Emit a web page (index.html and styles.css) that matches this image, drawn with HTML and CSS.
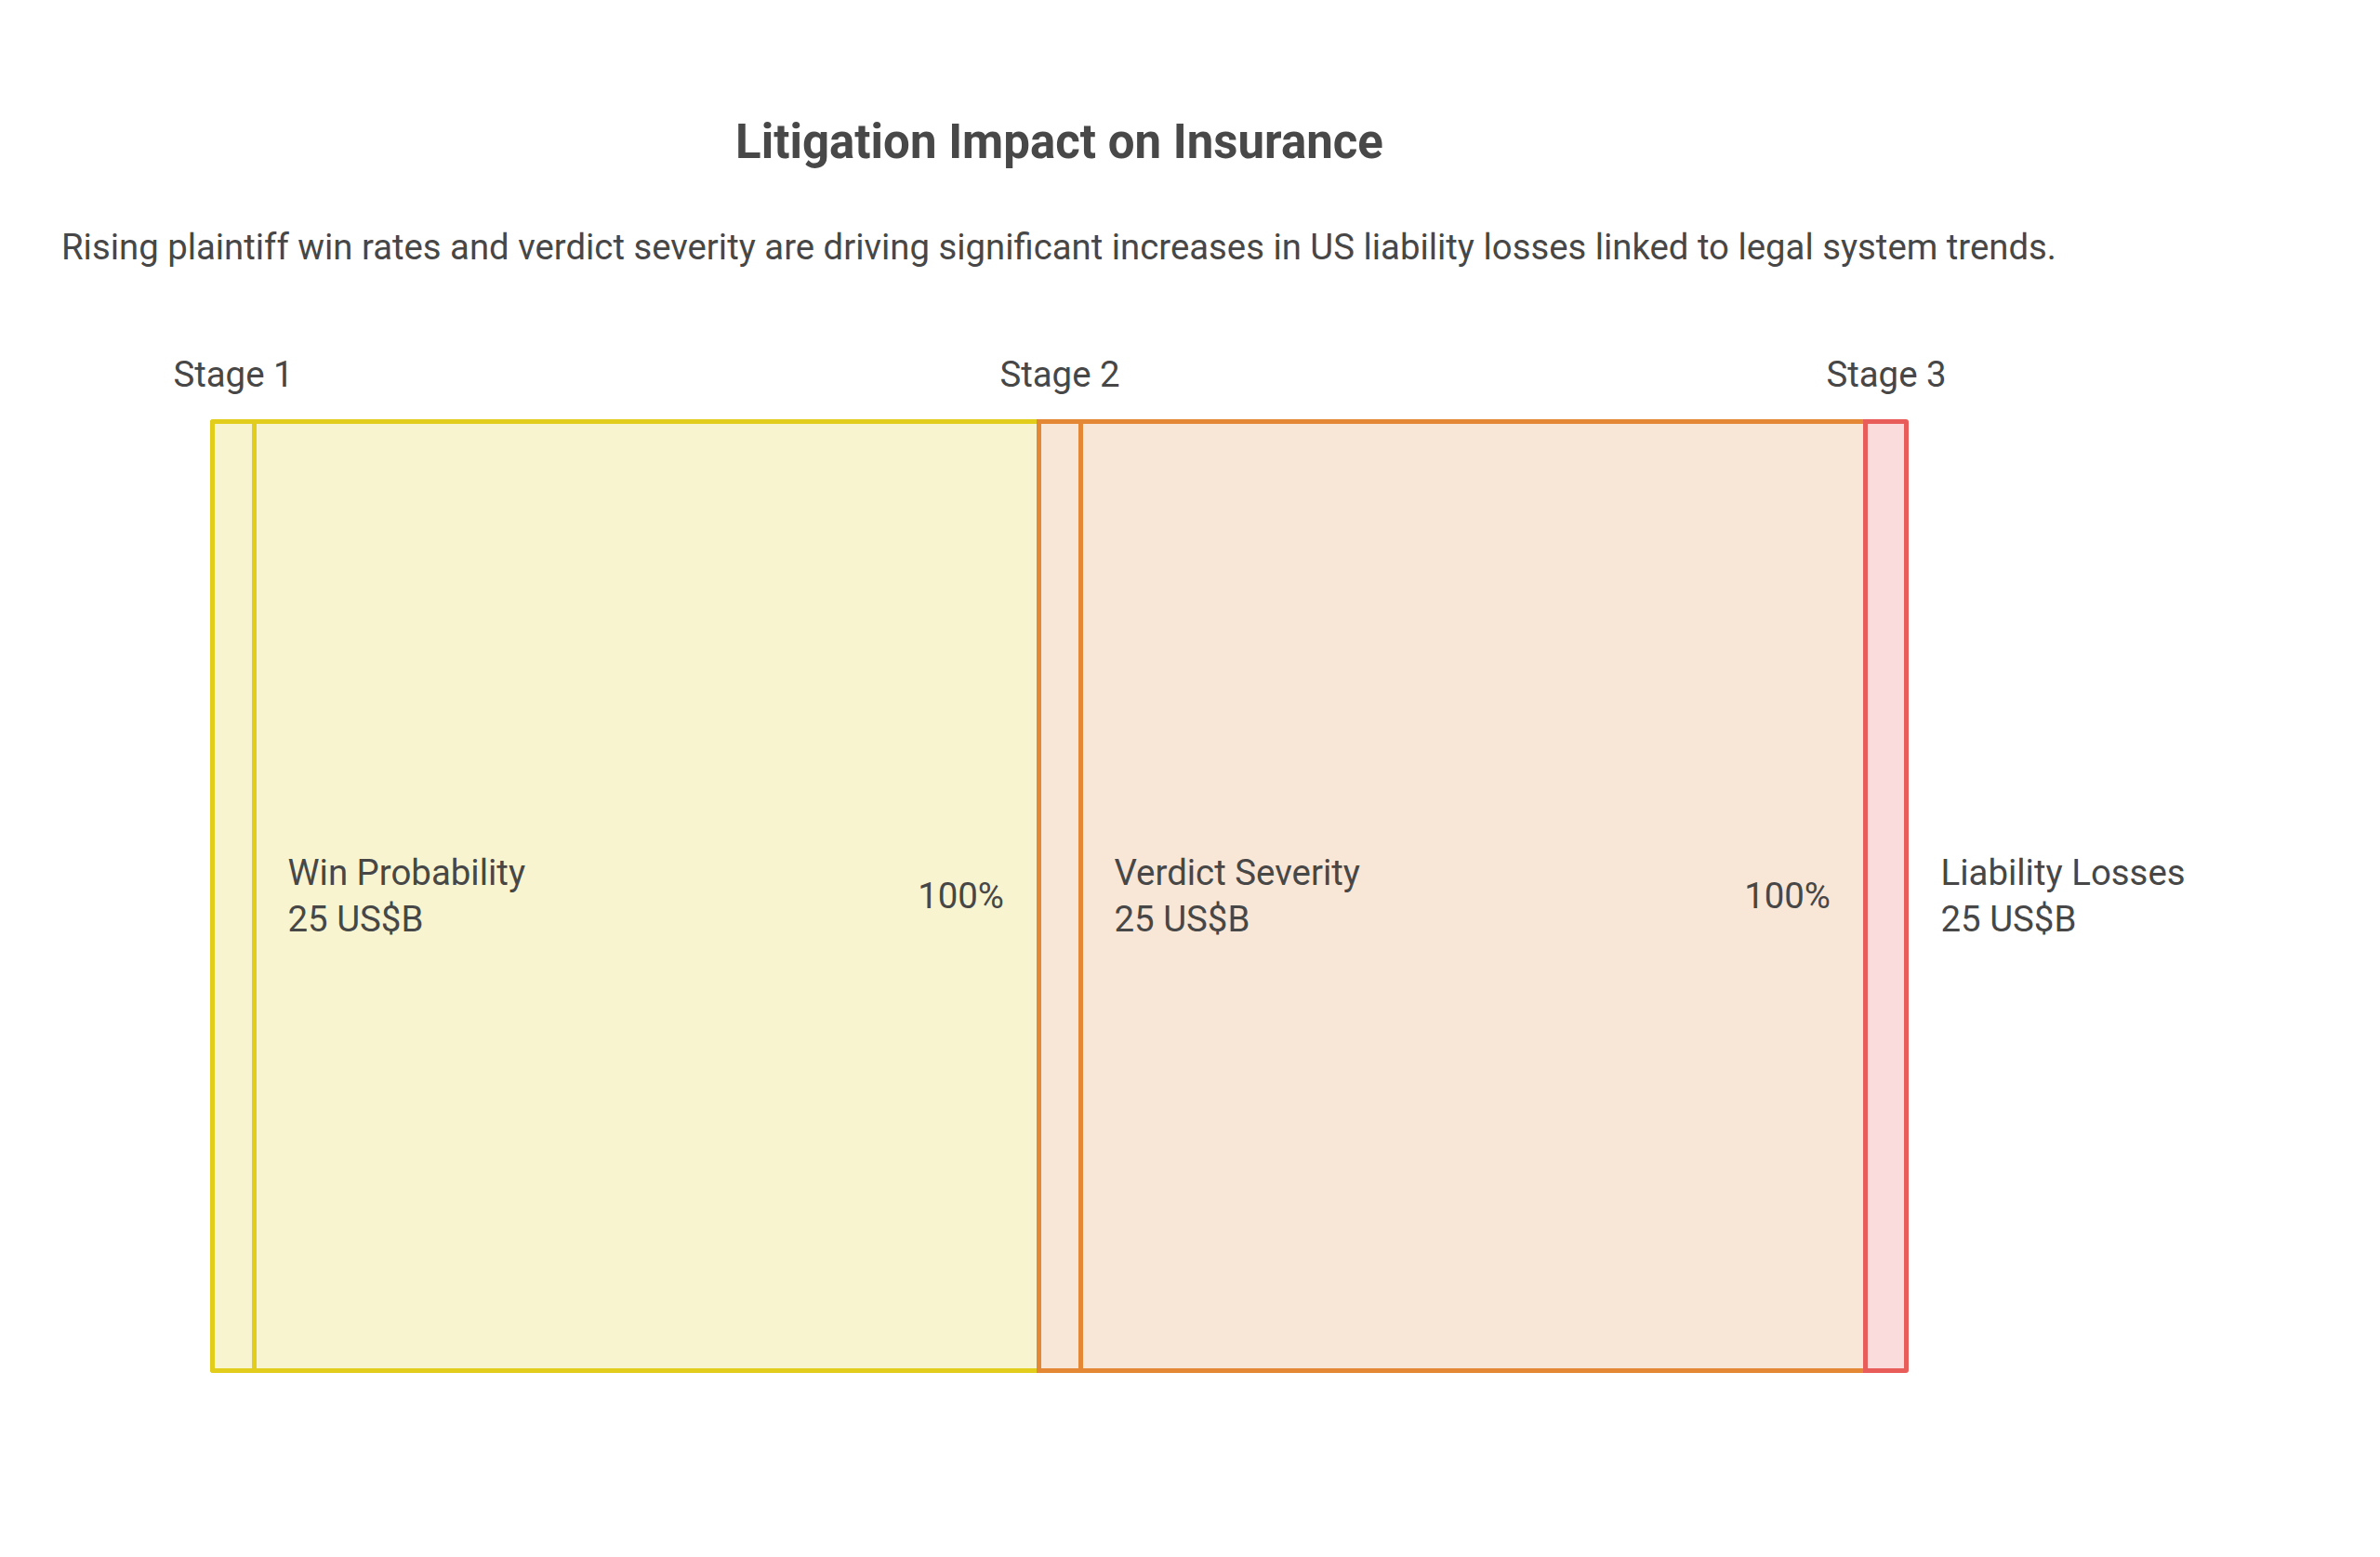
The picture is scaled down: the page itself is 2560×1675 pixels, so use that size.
FILE: index.html
```html
<!DOCTYPE html>
<html lang="en">
<head>
<meta charset="utf-8">
<title>Litigation Impact on Insurance</title>
<link rel="stylesheet" href="styles.css">
</head>
<body>
<main class="page">
  <h1 class="title">Litigation Impact on Insurance</h1>
  <p class="subtitle">Rising plaintiff win rates and verdict severity are driving significant increases in US liability losses linked to legal system trends.</p>

  <div class="stages">
    <div class="stage"><div class="stage-anchor"><span>Stage 1</span></div></div>
    <div class="stage"><div class="stage-anchor"><span>Stage 2</span></div></div>
    <div class="stage stage-last"><div class="stage-anchor"><span>Stage 3</span></div></div>
  </div>

  <div class="chart">
    <div class="band band-yellow">
      <div class="strip"></div>
      <div class="body">
        <div class="label"><div>Win Probability</div><div>25 US$B</div></div>
        <div class="pct">100%</div>
      </div>
    </div>
    <div class="band band-orange">
      <div class="strip"></div>
      <div class="body">
        <div class="label"><div>Verdict Severity</div><div>25 US$B</div></div>
        <div class="pct">100%</div>
      </div>
    </div>
    <div class="end"></div>
    <div class="outside">
      <div class="label"><div>Liability Losses</div><div>25 US$B</div></div>
    </div>
  </div>
</main>
</body>
</html>
```

FILE: styles.css
```css
html, body {
  margin: 0;
  padding: 0;
  background: #ffffff;
}

body {
  width: 2560px;
  height: 1675px;
  font-family: Roboto, "Liberation Sans", Arial, sans-serif;
  color: #474747;
  overflow: hidden;
}

.page {
  padding: 121px 0 0 66px;
}

.title {
  margin: 0 0 0 160px;
  width: 1827px;
  text-align: center;
  font-size: 51px;
  line-height: 64px;
  font-weight: 700;
  color: #484848;
}

.subtitle {
  margin: 57px 0 0 0;
  font-size: 38.3px;
  line-height: 48px;
  font-weight: 400;
  white-space: nowrap;
}

.stages {
  display: flex;
  margin: 88.7px 0 0 160px;
  height: 48px;
  font-size: 38.4px;
  line-height: 48px;
}

.stage {
  width: 889px;
  display: flex;
}

.stage-last {
  width: 49px;
}

.stage-anchor {
  width: 50px;
  display: flex;
  justify-content: center;
  white-space: nowrap;
}

.chart {
  display: flex;
  margin: 24.1px 0 0 160px;
  height: 1026px;
  font-size: 38.4px;
  line-height: 49.5px;
}

.band {
  box-sizing: border-box;
  width: 889px;
  display: flex;
  border-width: 5px 0 5px 5px;
  border-style: solid;
}

.strip {
  width: 40px;
  flex: none;
  border-right: 5px solid;
  border-color: inherit;
}

.body {
  flex: 1;
  display: flex;
  align-items: center;
  justify-content: space-between;
  padding: 0 35px 0 33.5px;
}

.label {
  white-space: nowrap;
}

.pct {
  white-space: nowrap;
}

.band-yellow {
  border-color: #e3cd1c;
  background: #f8f4d0;
  border-radius: 3px 0 0 3px;
}

.band-orange {
  border-color: #e48835;
  background: #f8e6d6;
}

.end {
  box-sizing: border-box;
  width: 49px;
  border: 5px solid #e85c5a;
  background: #fadcdd;
  border-radius: 0 3px 3px 0;
}

.outside {
  display: flex;
  align-items: center;
  padding-left: 34.5px;
}
```
